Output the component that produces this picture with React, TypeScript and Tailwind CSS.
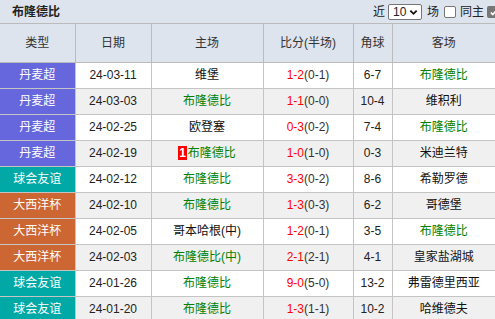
import React from "react";

type Row = {
    league: string;
    kind: "dk" | "club" | "atl";
    date: string;
    home: string;
    homeOwn: boolean;
    score: string;
    half: string;
    corner: string;
    away: string;
    awayOwn: boolean;
    card?: string;
};

const rows: Row[] = [
    { league: "丹麦超", kind: "dk", date: "24-03-11", home: "维堡", homeOwn: false, score: "1-2", half: "(0-1)", corner: "6-7", away: "布隆德比", awayOwn: true },
    { league: "丹麦超", kind: "dk", date: "24-03-03", home: "布隆德比", homeOwn: true, score: "1-1", half: "(0-0)", corner: "10-4", away: "维积利", awayOwn: false },
    { league: "丹麦超", kind: "dk", date: "24-02-25", home: "欧登塞", homeOwn: false, score: "0-3", half: "(0-2)", corner: "7-4", away: "布隆德比", awayOwn: true },
    { league: "丹麦超", kind: "dk", date: "24-02-19", home: "布隆德比", homeOwn: true, score: "1-0", half: "(1-0)", corner: "0-3", away: "米迪兰特", awayOwn: false, card: "1" },
    { league: "球会友谊", kind: "club", date: "24-02-12", home: "布隆德比", homeOwn: true, score: "3-3", half: "(0-2)", corner: "8-6", away: "希勒罗德", awayOwn: false },
    { league: "大西洋杯", kind: "atl", date: "24-02-10", home: "布隆德比", homeOwn: true, score: "1-3", half: "(0-3)", corner: "6-2", away: "哥德堡", awayOwn: false },
    { league: "大西洋杯", kind: "atl", date: "24-02-05", home: "哥本哈根(中)", homeOwn: false, score: "1-2", half: "(0-1)", corner: "3-5", away: "布隆德比", awayOwn: true },
    { league: "大西洋杯", kind: "atl", date: "24-02-03", home: "布隆德比(中)", homeOwn: true, score: "2-1", half: "(2-1)", corner: "4-1", away: "皇家盐湖城", awayOwn: false },
    { league: "球会友谊", kind: "club", date: "24-01-26", home: "布隆德比", homeOwn: true, score: "9-0", half: "(5-0)", corner: "13-2", away: "弗雷德里西亚", awayOwn: false },
    { league: "球会友谊", kind: "club", date: "24-01-20", home: "布隆德比", homeOwn: true, score: "1-3", half: "(1-1)", corner: "10-2", away: "哈维德夫", awayOwn: false },
];

const leagueBg = {
    dk: "bg-[#6666dd]",
    club: "bg-[#00a8a6]",
    atl: "bg-[#cc6633]",
};

export default function App() {
    return (
        <div
            className="w-[495px] h-[319px] overflow-hidden bg-white text-[12px] text-[#222]"
            style={{ fontFamily: '"Liberation Sans", "Noto Sans CJK SC", sans-serif' }}
        >
            {/* title bar */}
            <div className="h-[24px] flex items-center bg-[#dde4ee] border-b border-[#bbbbbb] pl-[12px] pr-0">
                <span className="font-bold text-[12px] text-[#222]">布隆德比</span>
                <div className="ml-auto flex items-center gap-[3px] mt-[1px]">
                    <span>近</span>
                    <div className="w-[34px] h-[16px] border border-[#767676] bg-white flex items-center pl-[4px] rounded-[2px]">
                        <span className="text-[12px] leading-none">10</span>
                        <svg viewBox="0 0 10 10" className="w-[9px] h-[9px] ml-[3px]">
                            <path d="M1.5 3 L5 6.5 L8.5 3" fill="none" stroke="#111" strokeWidth="2" />
                        </svg>
                    </div>
                    <span className="ml-[2px]">场</span>
                    <span className="w-[12px] h-[12px] border border-[#767676] bg-white rounded-[2px] ml-[2px]" />
                    <span className="ml-[1px]">同主</span>
                    <span className="w-[12px] h-[12px] bg-[#767676] rounded-[2px] flex items-center justify-center -mr-[4px]">
                        <svg viewBox="0 0 10 10" className="w-[9px] h-[9px]">
                            <path d="M2 5 L4.2 7.2 L8 2.8" fill="none" stroke="#fff" strokeWidth="1.8" />
                        </svg>
                    </span>
                </div>
            </div>

            <table className="w-[495px] table-fixed border-collapse">
                <colgroup>
                    <col className="w-[75px]" />
                    <col className="w-[76px]" />
                    <col className="w-[112px]" />
                    <col className="w-[90px]" />
                    <col className="w-[39px]" />
                    <col className="w-[103px]" />
                </colgroup>
                <thead>
                    <tr className="h-[38px] bg-[#dde4ee] text-[#333]">
                        {["类型", "日期", "主场", "比分(半场)", "角球", "客场"].map((h) => (
                            <th key={h} className="font-normal text-center border border-[#bbbbbb] border-t-0 first:border-l-0 last:border-r-0">
                                {h}
                            </th>
                        ))}
                    </tr>
                </thead>
                <tbody>
                    {rows.map((r, i) => (
                        <tr key={r.date} className={`h-[26px] ${i % 2 === 0 ? "bg-white" : "bg-[#f0f0f0]"}`}>
                            <td className={`text-center text-white border border-[#c4c4c4] border-l-0 ${leagueBg[r.kind]}`}>
                                {r.league}
                            </td>
                            <td className="text-center border border-[#c4c4c4]">{r.date}</td>
                            <td className={`text-center border border-[#c4c4c4] ${r.homeOwn ? "text-[#008000]" : "text-[#111]"}`}>
                                {r.card && (
                                    <span className="inline-block bg-[#ff0000] text-white font-bold px-[1px] leading-[14px] mr-[1px]">
                                        {r.card}
                                    </span>
                                )}
                                {r.home}
                            </td>
                            <td className="text-center border border-[#c4c4c4]">
                                <span className="text-[#ff0000]">{r.score}</span>
                                <span className="text-[#333]">{r.half}</span>
                            </td>
                            <td className="text-center border border-[#c4c4c4]">{r.corner}</td>
                            <td className={`text-center border border-[#c4c4c4] border-r-0 ${r.awayOwn ? "text-[#008000]" : "text-[#111]"}`}>
                                {r.away}
                            </td>
                        </tr>
                    ))}
                </tbody>
            </table>
        </div>
    );
}
